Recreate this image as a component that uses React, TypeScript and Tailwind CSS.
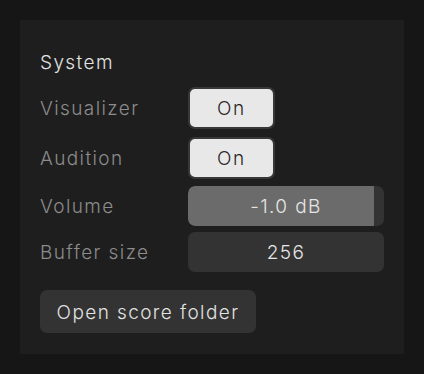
import React from "react";

const font = { fontFamily: 'Inter, "DejaVu Sans", sans-serif' };

export default function App() {
  return (
    <div className="w-[424px] h-[374px] bg-[#161616] p-[20px]" style={font}>
      <div className="w-[384px] h-[334px] bg-[#1e1e1e] px-[20px] pt-[32px]">
        <div className="text-[19px] leading-[22px] text-[#e2e2e2] h-[22px] tracking-[1.4px] font-[350]">System</div>
        <div className="mt-[13px] flex flex-col font-[350]">
          <div className="flex items-center h-[42px]">
            <div className="w-[148px] pt-[3px] text-[19px] text-[#8c8c8c] tracking-[1.4px]">Visualizer</div>
            <button className="w-[87px] h-[42px] pt-[3px] rounded-[7px] bg-[#e8e8e8] border-2 border-[#383838] text-[19px] text-[#262626] tracking-[1.8px]">On</button>
          </div>
          <div className="flex items-center h-[42px] mt-[8px]">
            <div className="w-[148px] pt-[3px] text-[19px] text-[#8c8c8c] tracking-[1.4px]">Audition</div>
            <button className="w-[87px] h-[42px] pt-[3px] rounded-[7px] bg-[#e8e8e8] border-2 border-[#383838] text-[19px] text-[#262626] tracking-[1.8px]">On</button>
          </div>
          <div className="flex items-center h-[40px] mt-[7px]">
            <div className="w-[148px] pt-[3px] text-[19px] text-[#8c8c8c] tracking-[1.4px]">Volume</div>
            <div className="relative w-[196px] h-[40px] rounded-[7px] bg-[#333333] overflow-hidden">
              <div className="absolute left-0 top-0 bottom-0 w-[186px] bg-[#6b6b6b] rounded-l-[7px]" />
              <div className="relative h-full pt-[3px] flex items-center justify-center text-[19px] text-[#e6e6e6] tracking-[1.4px]">-1.0 dB</div>
            </div>
          </div>
          <div className="flex items-center h-[40px] mt-[6px]">
            <div className="w-[148px] pt-[3px] text-[19px] text-[#8c8c8c] tracking-[1.4px]">Buffer size</div>
            <div className="w-[196px] h-[40px] pt-[3px] rounded-[7px] bg-[#333333] flex items-center justify-center text-[19px] text-[#e6e6e6] tracking-[1.4px]">256</div>
          </div>
          <div className="mt-[18px]">
            <button className="w-[216px] h-[43px] pt-[3px] rounded-[7px] bg-[#333333] text-[19px] text-[#e2e2e2] tracking-[1.4px]">Open score folder</button>
          </div>
        </div>
      </div>
    </div>
  );
}
